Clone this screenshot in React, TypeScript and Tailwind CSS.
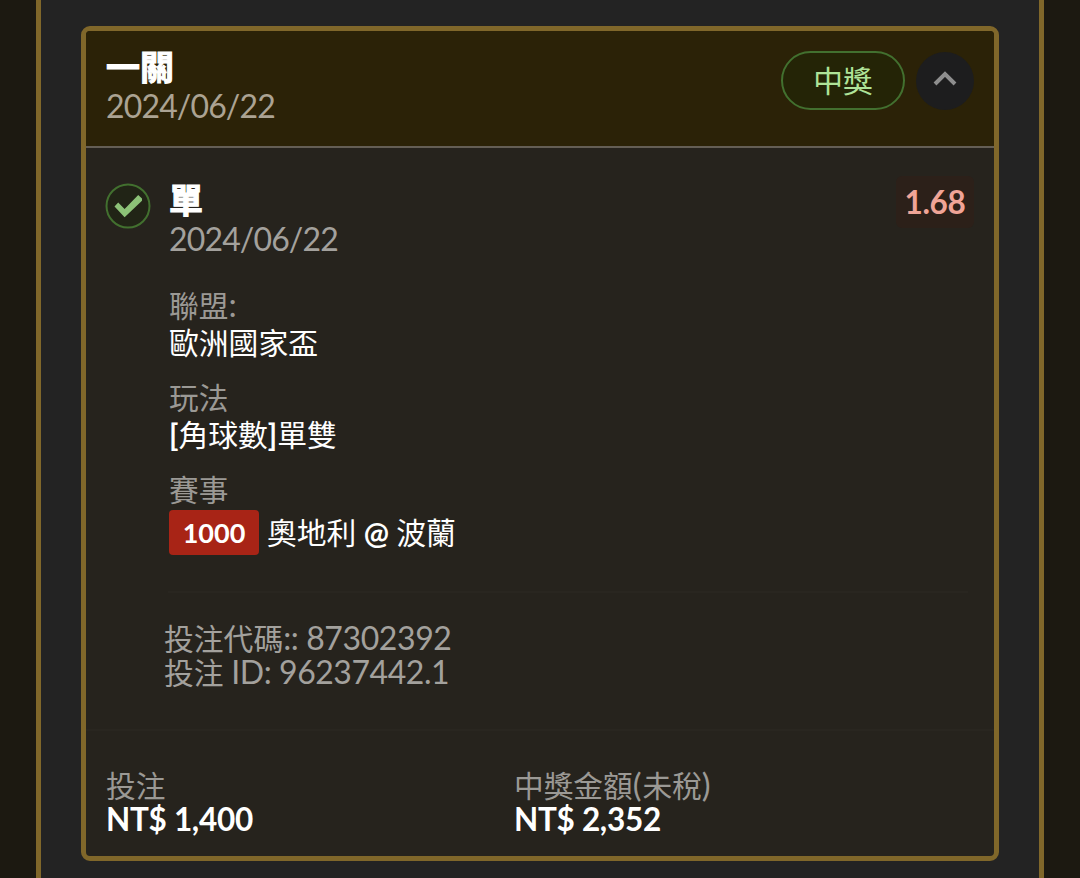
import type { ReactNode } from "react";

const DETAILS = [
  { label: "聯盟:", value: "歐洲國家盃" },
  { label: "玩法", value: "[角球數]單雙" },
];

const TOTALS = [
  { label: "投注", value: "NT$ 1,400" },
  { label: "中獎金額(未稅)", value: "NT$ 2,352" },
];

// latin runs are set slightly larger than the chinese glyphs around them
function Mixed({ text, latin }: { text: string; latin: string }) {
  return (
    <>
      {text.split(/([\x20-\x7e]+)/).map((part, i) =>
        i % 2 ? (
          <span key={i} className={latin}>
            {part}
          </span>
        ) : (
          part
        )
      )}
    </>
  );
}

function Label({ children }: { children: string }) {
  return (
    <div className="h-[37px] text-[29.7px] leading-[37px] text-[#9b9995]">
      <Mixed text={children} latin="text-[33px] leading-none tracking-[0.9px]" />
    </div>
  );
}

function Value({ children }: { children: string }) {
  return (
    <div className="h-[37px] text-[29.8px] leading-[37px]">
      <Mixed text={children} latin="text-[30px] leading-none font-bold" />
    </div>
  );
}

function Heading({ children }: { children: ReactNode }) {
  return (
    <div className="text-[34px] leading-[34px] font-bold [-webkit-text-stroke:1.1px_white]">
      {children}
    </div>
  );
}

function CheckBadge() {
  return (
    <svg width="46" height="46" viewBox="0 0 46 46" fill="none" className="shrink-0">
      <circle cx="23" cy="23" r="21.5" fill="#212416" stroke="#42702f" strokeWidth="2" />
      <path d="M9.5 23.4 L13.2 19.6 L19.6 26 L33.2 12 L37 15.6 L37 17.8 L19.6 34.2 Z" fill="#8cc277" />
    </svg>
  );
}

export default function App() {
  return (
    <div className="h-[878px] w-[1080px] overflow-hidden bg-[#1c1911] px-[36px] font-['Lato','Noto_Sans_CJK_TC',sans-serif] text-white">
      <div className="h-full border-x-[5px] border-[#80672a] bg-[#232323] px-[40px] pt-[26px]">
        <div className="flex h-[835px] w-[918px] flex-col overflow-hidden rounded-[9px] border-[5px] border-[#80672a] bg-[#26231d]">
          {/* header */}
          <div className="flex h-[117px] shrink-0 items-start justify-between border-b-2 border-[#645e55] bg-[#2b2207] pt-[19px] pr-[20px] pl-[20px]">
            <div>
              <Heading>一關</Heading>
              <div className="mt-[4px] text-[32px] leading-[36px] tracking-[-0.85px] text-[#aba393]">
                2024/06/22
              </div>
            </div>
            <div className="flex items-center gap-[11px] pt-px">
              <div className="flex h-[59px] w-[124px] items-center justify-center rounded-full border-2 border-[#42702f] bg-[#242406] text-[29.7px] leading-[37px] text-[#afe398]">
                中獎
              </div>
              <div className="flex size-[58px] items-center justify-center rounded-full bg-[#1d1d1e]">
                <svg width="24" height="18" viewBox="0 0 24 18" fill="none" className="-mt-[3px]">
                  <path d="M2 14 L12 4 L22 14" stroke="#8e8e8e" strokeWidth="4" />
                </svg>
              </div>
            </div>
          </div>

          {/* selection */}
          <div className="flex h-[583px] shrink-0 items-start border-b-2 border-[#292620] pt-[35px] pr-[20px] pl-[19px]">
            <CheckBadge />
            <div className="ml-[18px] flex-1">
              <div className="flex h-[76px] items-start justify-between">
                <div>
                  <Heading>單</Heading>
                  <div className="mt-[4px] text-[32px] leading-[36px] tracking-[-0.85px] text-[#a3a19d]">
                    2024/06/22
                  </div>
                </div>
                <div className="-mt-[7px] flex h-[52px] w-[78px] items-center justify-center rounded-md bg-[#2c2019] text-[31.5px] leading-[37px] font-bold tracking-[-0.3px] text-[#f0a497]">
                  1.68
                </div>
              </div>

              <div className="mt-[28px] flex flex-col gap-[18px]">
                {DETAILS.map(({ label, value }) => (
                  <div key={label}>
                    <Label>{label}</Label>
                    <Value>{value}</Value>
                  </div>
                ))}
                <div>
                  <Label>賽事</Label>
                  <div className="mt-[2px] flex items-center gap-[8px]">
                    <span className="flex h-[45px] w-[90px] items-center justify-center rounded-[4px] bg-[#a82416] text-[27px] leading-[32px] font-bold">
                      1000
                    </span>
                    <Value>奧地利 @ 波蘭</Value>
                  </div>
                </div>
              </div>

              <div className="mt-[36px] -ml-px h-[2px] w-[800px] bg-[#292620]" />

              <div className="mt-[29px] -ml-[5px] text-[29.8px] leading-[34px] text-[#a3a19d]">
                <div className="h-[34px]">
                  <Mixed text="投注代碼:: 87302392" latin="text-[32px] leading-none tracking-[-0.4px]" />
                </div>
                <div className="h-[34px]">
                  <Mixed text="投注 ID: 96237442.1" latin="text-[32px] leading-none tracking-[-0.45px]" />
                </div>
              </div>
            </div>
          </div>

          {/* totals */}
          <div className="grid flex-1 grid-cols-[408px_1fr] pt-[36px] pl-[20px]">
            {TOTALS.map(({ label, value }) => (
              <div key={label}>
                <Label>{label}</Label>
                <div className="text-[31.5px] leading-[30px] font-bold tracking-[-0.3px]">{value}</div>
              </div>
            ))}
          </div>
        </div>
      </div>
    </div>
  );
}
